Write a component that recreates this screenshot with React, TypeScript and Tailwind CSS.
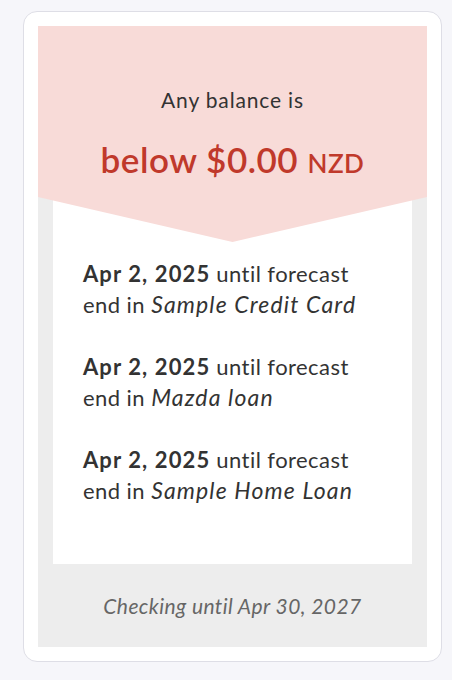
const items = [
  { date: 'Apr 2, 2025', account: 'Sample Credit Card' },
  { date: 'Apr 2, 2025', account: 'Mazda loan' },
  { date: 'Apr 2, 2025', account: 'Sample Home Loan' },
];

export default function App() {
  return (
    <div
      className="min-h-[680px] w-[452px] bg-[#f6f6fa] pt-[11px] pl-[23px]"
      style={{ fontFamily: "Lato, 'Open Sans', sans-serif" }}
    >
      <div className="w-[419px] rounded-[14px] border border-[#dedee6] bg-white p-[14px]">
        <div className="flex flex-col bg-[#ededed]">
          {/* Header with arrow */}
          <div className="relative z-10 h-[216px] bg-[#f8dbd8] [clip-path:polygon(0_0,100%_0,100%_171px,50%_100%,0_171px)]">
            <div className="flex flex-col items-center pt-[60px] text-center">
              <div className="text-[21px] leading-[28px] tracking-[0.04em] text-[#333]">Any balance is</div>
              <div className="mt-[23px] text-[35px] font-semibold leading-[44px] tracking-[0.015em] text-[#c0392b]">
                below $0.00 <span className="text-[26px]">NZD</span>
              </div>
            </div>
          </div>

          {/* White list */}
          <div className="mx-[15px] -mt-[45px] flex h-[367px] flex-col gap-[32px] bg-white pl-[30px] pr-[30px] pt-[62px] text-[22px] leading-[30px] tracking-[0.02em] text-[#333]">
            {items.map((it, i) => (
              <p key={i} className="max-w-[285px]">
                <span className="font-bold tracking-[0.05em]">{it.date}</span> until forecast end in{' '}
                <em className="text-[23px] italic tracking-[0.05em]">{it.account}</em>
              </p>
            ))}
          </div>

          <div className="flex h-[83px] items-center justify-center text-[21px] italic tracking-[0.02em] text-[#666]">
            Checking until Apr 30, 2027
          </div>
        </div>
      </div>
    </div>
  );
}
